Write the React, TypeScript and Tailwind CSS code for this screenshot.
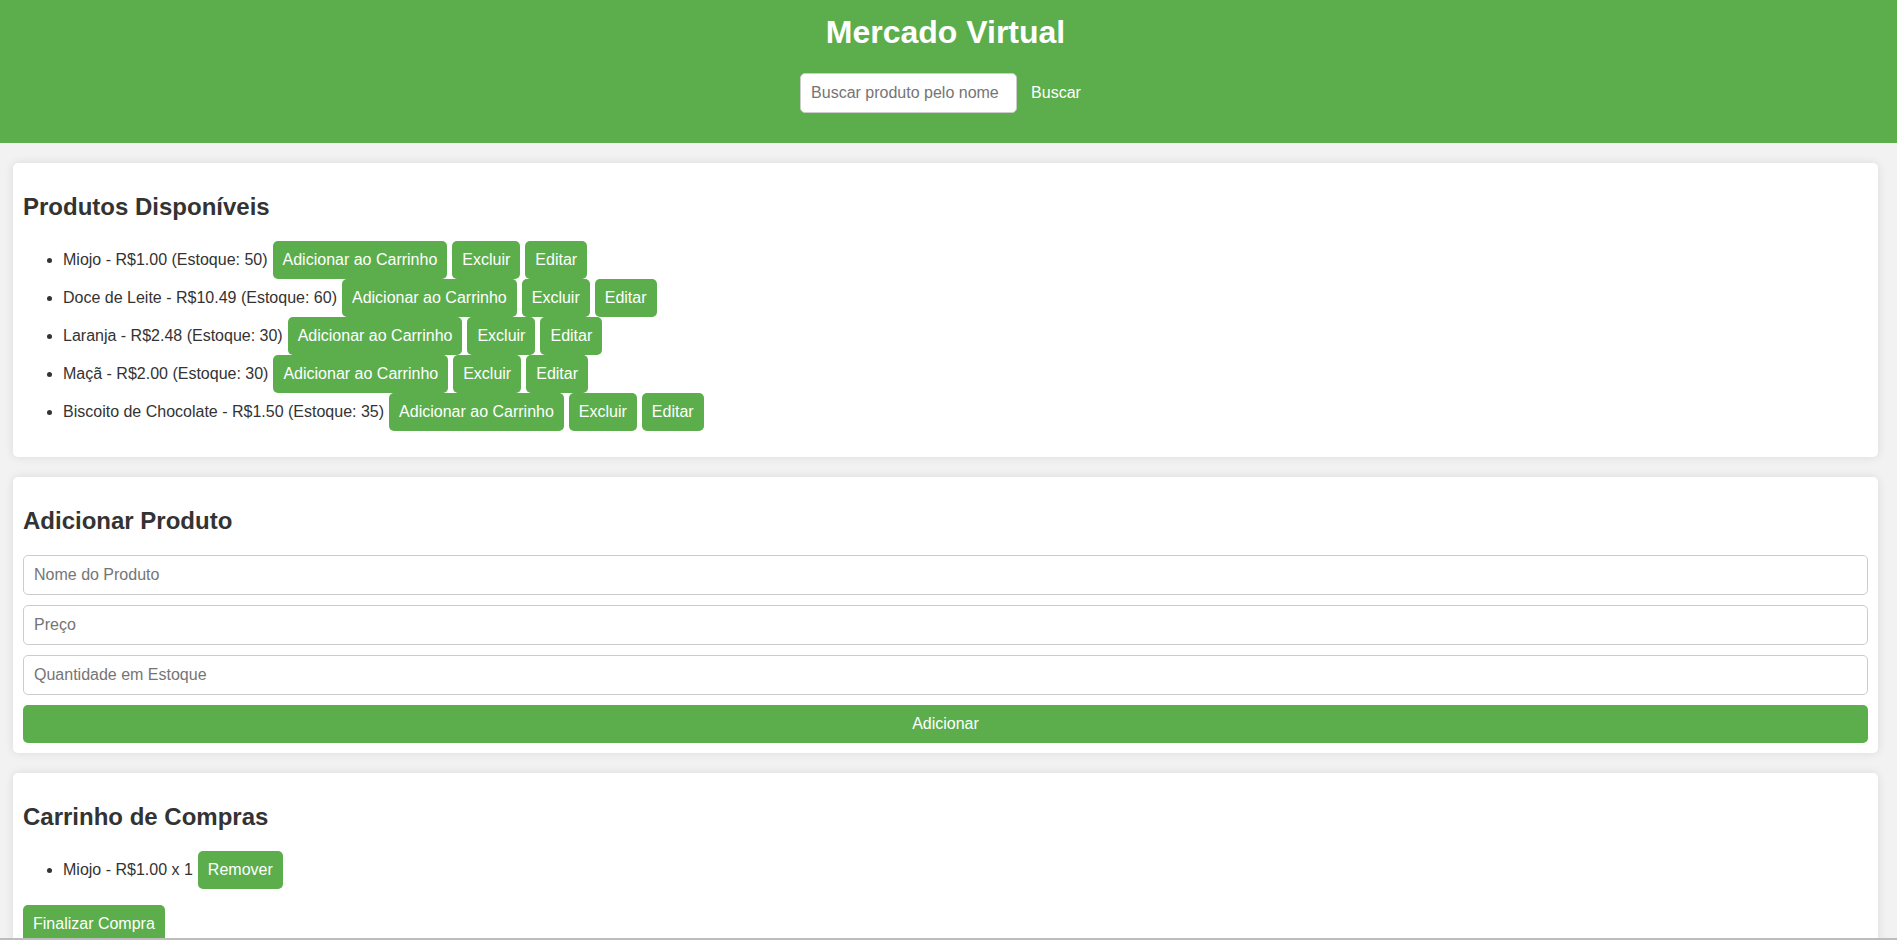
import React from 'react';

const products = [
  { name: 'Miojo', price: 1.0, stock: 50 },
  { name: 'Doce de Leite', price: 10.49, stock: 60 },
  { name: 'Laranja', price: 2.48, stock: 30 },
  { name: 'Maçã', price: 2.0, stock: 30 },
  { name: 'Biscoito de Chocolate', price: 1.5, stock: 35 },
];

const cart = [{ name: 'Miojo', price: 1.0, qty: 1 }];

function Button({ children, className = '' }: { children: React.ReactNode; className?: string }) {
  return (
    <button className={`h-[38px] px-[10px] rounded-[5px] bg-[#5bae4b] text-white text-[16px] leading-[18px] ${className}`}>
      {children}
    </button>
  );
}

function Bullet() {
  return <span className="w-[5px] h-[5px] rounded-full bg-[#333] mr-[11px] shrink-0" />;
}

function Card({ title, children }: { title: string; children: React.ReactNode }) {
  return (
    <section className="bg-white rounded-[5px] p-[10px] mb-[20px] shadow-[0_0_10px_rgba(0,0,0,0.1)]">
      <h2 className="text-[24px] font-bold leading-[28px] my-[20px] text-[#333]">{title}</h2>
      {children}
    </section>
  );
}

function App() {
  return (
    <div className="h-[940px] overflow-hidden bg-[#f2f2f2] font-['Liberation_Sans',Arial,sans-serif] text-[#333] text-[16px]">
      <header className="bg-[#5bae4b] pt-[14px] pb-[30px] pr-[6px] text-center">
        <h1 className="text-[32px] font-bold leading-[37px] text-white">Mercado Virtual</h1>
        <div className="mt-[22px] flex justify-center items-center">
          <input
            type="text"
            placeholder="Buscar produto pelo nome"
            className="w-[217px] h-[40px] px-[10px] bg-white border border-[#ccc] rounded-[5px] text-[16px] placeholder:text-[#757575] outline-none"
          />
          <Button className="ml-[4px]">Buscar</Button>
        </div>
      </header>

      <main className="pt-[20px] pl-[13px] pr-[19px]">
        <Card title="Produtos Disponíveis">
          <ul className="pl-[24px] mb-[16px]">
            {products.map((p) => (
              <li key={p.name} className="flex items-center h-[38px]">
                <Bullet />
                <span>
                  {p.name} - R${p.price.toFixed(2)} (Estoque: {p.stock})
                </span>
                <Button className="ml-[5px]">Adicionar ao Carrinho</Button>
                <Button className="ml-[5px]">Excluir</Button>
                <Button className="ml-[5px]">Editar</Button>
              </li>
            ))}
          </ul>
        </Card>

        <Card title="Adicionar Produto">
          {['Nome do Produto', 'Preço', 'Quantidade em Estoque'].map((ph) => (
            <input
              key={ph}
              type="text"
              placeholder={ph}
              className="block w-full h-[40px] mb-[10px] px-[10px] border border-[#ccc] rounded-[5px] text-[16px] placeholder:text-[#757575] outline-none"
            />
          ))}
          <Button className="w-full block">Adicionar</Button>
        </Card>

        <Card title="Carrinho de Compras">
          <ul className="pl-[24px] mb-[16px]">
            {cart.map((c) => (
              <li key={c.name} className="flex items-center h-[38px]">
                <Bullet />
                <span>
                  {c.name} - R${c.price.toFixed(2)} x {c.qty}
                </span>
                <Button className="ml-[5px]">Remover</Button>
              </li>
            ))}
          </ul>
          <Button>Finalizar Compra</Button>
        </Card>
      </main>

      <div className="fixed bottom-0 left-0 right-0 h-[2px] bg-[#bdbdbd]" />
    </div>
  );
}

export default App;
